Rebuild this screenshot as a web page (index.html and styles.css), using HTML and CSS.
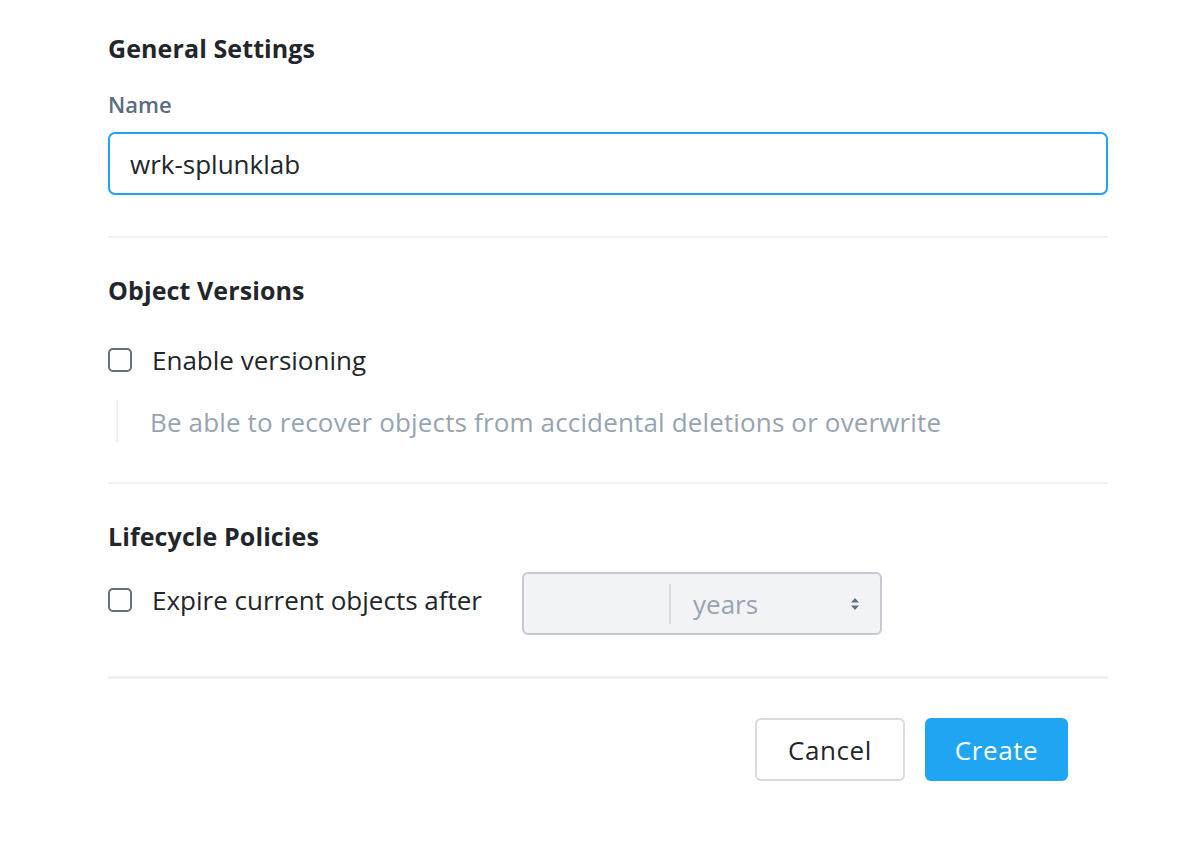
FILE: index.html
```html
<!DOCTYPE html>
<html>
<head>
<meta charset="utf-8">
<link rel="stylesheet" href="styles.css">
</head>
<body>
<main class="form">
  <section class="section">
    <h2 class="title">General Settings</h2>
    <label class="label" for="name">Name</label>
    <input class="text-input" id="name" type="text" value="wrk-splunklab">
  </section>
  <div class="divider"></div>
  <section class="section">
    <h2 class="title title-gap">Object Versions</h2>
    <div class="check-row check-row-first">
      <span class="checkbox"></span>
      <span class="check-label">Enable versioning</span>
    </div>
    <div class="help">Be able to recover objects from accidental deletions or overwrite</div>
  </section>
  <div class="divider divider-b"></div>
  <section class="section">
    <h2 class="title title-gap">Lifecycle Policies</h2>
    <div class="expire-row">
      <div class="check-row check-row-expire">
        <span class="checkbox"></span>
        <span class="check-label">Expire current objects after</span>
      </div>
      <div class="duration">
        <div class="duration-num"></div>
        <div class="duration-sep"></div>
        <div class="duration-unit">
          <span>years</span>
          <svg class="arrows" width="10" height="14" viewBox="0 0 10 14"><path d="M5 1 L9 5.5 H1 Z" fill="#5f6f84"/><path d="M5 13 L9 8.5 H1 Z" fill="#5f6f84"/></svg>
        </div>
      </div>
    </div>
  </section>
  <div class="divider divider-thick"></div>
  <div class="actions">
    <button class="btn btn-cancel">Cancel</button>
    <button class="btn btn-create">Create</button>
  </div>
</main>
</body>
</html>
```

FILE: styles.css
```css
html, body {
  margin: 0;
  padding: 0;
  background: #ffffff;
}
body {
  font-family: "Open Sans", "Noto Sans", sans-serif;
  color: #22262b;
}
.form {
  width: 1000px;
  margin-left: 108px;
  padding-top: 32px;
}
.section {
  display: flex;
  flex-direction: column;
  align-items: flex-start;
}
.title {
  margin: 0;
  font-size: 25px;
  line-height: 32px;
  font-weight: 700;
  letter-spacing: 0.1px;
  color: #22262b;
}
.title-gap {
  margin-top: 36px;
}
.label {
  margin-top: 29px;
  font-size: 22px;
  line-height: 22px;
  font-weight: 600;
  color: #5b6b80;
}
.text-input {
  margin-top: 17px;
  box-sizing: border-box;
  width: 1000px;
  height: 63px;
  border: 2px solid #22a3f0;
  border-radius: 7px;
  padding: 0 20px;
  font-family: inherit;
  font-size: 26px;
  color: #22262b;
  outline: none;
}
.divider {
  height: 2px;
  background: #f0f1f3;
  margin-top: 41px;
}
.divider-b {
  margin-top: 40px;
}
.divider-thick {
  height: 3px;
  background: #eef0f3;
  margin-top: 41px;
}
.check-row {
  display: flex;
  align-items: center;
  height: 32px;
}
.check-row-first {
  margin-top: 38px;
}
.check-row-expire {
  margin-top: 12px;
}
.checkbox {
  box-sizing: border-box;
  width: 24px;
  height: 24px;
  border: 2px solid #5f7085;
  border-radius: 5px;
  margin-right: 20px;
}
.check-label {
  font-size: 26px;
  line-height: 32px;
}
.help {
  margin-top: 24px;
  margin-left: 8px;
  border-left: 2px solid #eceef1;
  padding-left: 32px;
  padding-top: 3px;
  height: 39px;
  line-height: 39px;
  font-size: 26px;
  letter-spacing: 0.15px;
  color: #98a3b2;
}
.expire-row {
  display: flex;
  align-items: flex-start;
  margin-top: 20px;
  gap: 40px;
}
.duration {
  box-sizing: border-box;
  width: 360px;
  height: 63px;
  background: #f2f3f5;
  border: 2px solid #c5cad2;
  border-radius: 6px;
  display: flex;
  align-items: center;
}
.duration-num {
  width: 145px;
}
.duration-sep {
  width: 2px;
  height: 40px;
  background: #d6d9de;
}
.duration-unit {
  flex: 1;
  display: flex;
  align-items: center;
  justify-content: space-between;
  padding-left: 22px;
  padding-right: 20px;
  font-size: 26px;
  color: #98a3b2;
}
.arrows {
  display: block;
}
.actions {
  display: flex;
  justify-content: flex-end;
  gap: 20px;
  margin-top: 39px;
  padding-right: 40px;
}
.btn {
  box-sizing: border-box;
  height: 63px;
  border-radius: 6px;
  font-family: inherit;
  font-size: 26px;
  letter-spacing: 0.6px;
  cursor: pointer;
}
.btn-cancel {
  width: 150px;
  background: #ffffff;
  border: 2px solid #d8dbe0;
  color: #22262b;
}
.btn-create {
  width: 143px;
  background: #20a5f3;
  border: none;
  color: #ffffff;
}
```
